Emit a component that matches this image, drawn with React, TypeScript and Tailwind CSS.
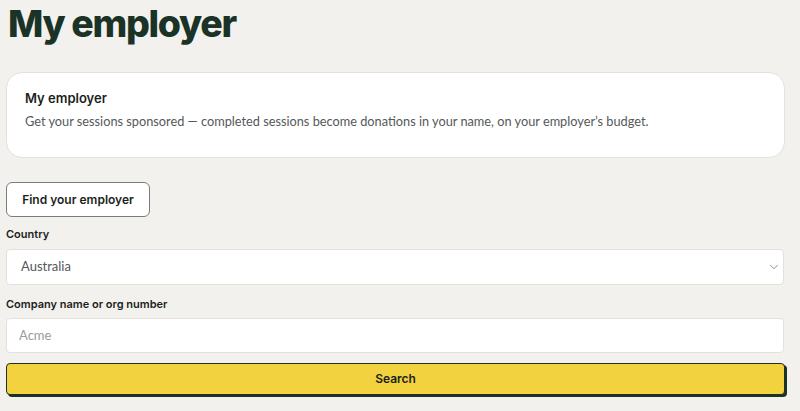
import { ChevronDown } from 'lucide-react'

export default function App() {
  return (
    <div className="min-h-[411px] bg-[#f3f1ed] px-[6px] pt-[2px] font-['Inter',sans-serif] text-[#1b1f1c]">
      <h1 className="pl-[2px] text-[37.5px] font-extrabold leading-[44px] tracking-[-0.035em] text-[#1b3326]">
        My employer
      </h1>

      <div className="mt-[26px] mr-[9px] rounded-[16px] border border-[#e3e1dc] bg-white px-[18px] pt-[17px] pb-[27px]">
        <h2 className="text-[13px] font-semibold leading-[16px] text-[#1b1f1c]">My employer</h2>
        <p className="mt-[6px] font-['Lato',sans-serif] text-[12.75px] leading-[18px] text-[#55585a]">
          Get your sessions sponsored — completed sessions become donations in your name, on your employer’s budget.
        </p>
      </div>

      <button className="mt-[24px] flex h-[35px] w-[144px] items-center justify-center rounded-[6px] border border-[#7b7d7a] bg-white text-[12px] font-semibold text-[#1b1f1c]">
        Find your employer
      </button>

      <label className="mt-[9px] block text-[11px] font-semibold leading-[16px] text-[#1b1f1c]">Country</label>
      <div className="mt-[7px] mr-[10px] flex h-[36px] items-center justify-between rounded-[4px] border border-[#e3e1dc] bg-white pl-[14px] pr-[2px]">
        <span className="font-['Lato',sans-serif] text-[13px] text-[#55585a]">Australia</span>
        <ChevronDown className="h-[14px] w-[14px] text-[#7d807d]" strokeWidth={1.5} />
      </div>

      <label className="mt-[11px] block text-[11px] font-semibold leading-[16px] text-[#1b1f1c]">
        Company name or org number
      </label>
      <div className="mt-[6px] mr-[10px] flex h-[35px] items-center rounded-[4px] border border-[#e3e1dc] bg-white pl-[12px]">
        <span className="font-['Lato',sans-serif] text-[13px] text-[#9a9c9a]">Acme</span>
      </div>

      <button className="mt-[10px] mr-[9px] flex h-[32px] w-[calc(100%-9px)] items-center justify-center rounded-[4px] border border-[#1b3326] bg-[#f3d240] text-[12px] font-semibold text-[#1b1f1c] shadow-[2px_2px_0_#1b3326]">
        Search
      </button>
    </div>
  )
}
